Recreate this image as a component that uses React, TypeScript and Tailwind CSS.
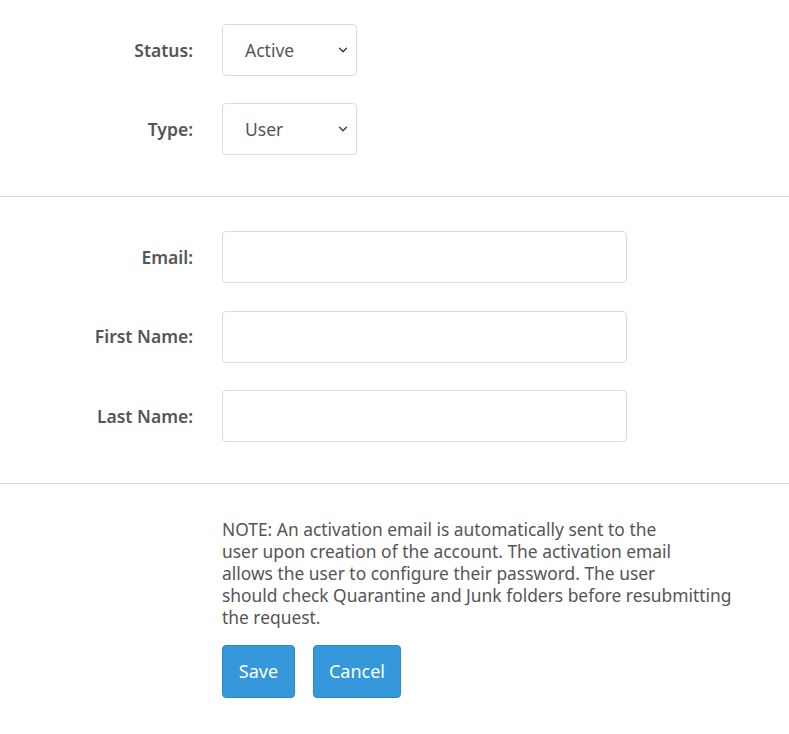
import { ChevronDown } from 'lucide-react'

const font = { fontFamily: '"Noto Sans", "Open Sans", "Liberation Sans", sans-serif' }

function SelectField({ label, value, options }: { label: string; value: string; options: string[] }) {
  return (
    <div className="flex items-center">
      <label className="w-[193px] text-right text-[17.5px] font-semibold text-[#555]">{label}</label>
      <div className="relative ml-[29px] w-[135px]">
        <select
          defaultValue={value}
          className="h-[52px] w-full appearance-none rounded-[4px] border border-[#dcdcdc] bg-white pl-[22px] text-[17.5px] text-[#555] outline-none"
        >
          {options.map((o) => (
            <option key={o}>{o}</option>
          ))}
        </select>
        <ChevronDown className="pointer-events-none absolute right-[7px] top-[19px] h-[14px] w-[14px] text-[#333]" strokeWidth={2.2} />
      </div>
    </div>
  )
}

function TextField({ label }: { label: string }) {
  return (
    <div className="flex items-center">
      <label className="w-[193px] text-right text-[17.5px] font-semibold text-[#555]">{label}</label>
      <input
        type="text"
        className="ml-[29px] h-[52px] w-[405px] rounded-[4px] border border-[#dcdcdc] bg-white px-3 text-[17.5px] text-[#555] outline-none"
      />
    </div>
  )
}

export default function App() {
  return (
    <div className="min-h-screen bg-white pt-[24px]" style={font}>
      {/* Account settings */}
      <div className="flex flex-col gap-[27px] pb-[41px]">
        <SelectField label="Status:" value="Active" options={['Active', 'Inactive']} />
        <SelectField label="Type:" value="User" options={['User', 'Admin']} />
      </div>

      {/* Personal info */}
      <div className="flex flex-col gap-[27.5px] border-t border-[#dedede] pt-[34px] pb-[41px]">
        <TextField label="Email:" />
        <TextField label="First Name:" />
        <TextField label="Last Name:" />
      </div>

      {/* Note + actions */}
      <div className="border-t border-[#dedede] pl-[222px] pt-[34px]">
        <p className="text-[17.4px] leading-[22px] text-[#555]">
          NOTE: An activation email is automatically sent to the
          <br />
          user upon creation of the account. The activation email
          <br />
          allows the user to configure their password. The user
          <br />
          should check Quarantine and Junk folders before resubmitting
          <br />
          the request.
        </p>
        <div className="mt-[17px] flex gap-[18px]">
          <button className="h-[53px] w-[73px] rounded-[4px] border border-[#2e86c4] bg-[#3498db] text-[18px] text-white">
            Save
          </button>
          <button className="h-[53px] w-[88px] rounded-[4px] border border-[#2e86c4] bg-[#3498db] text-[18px] text-white">
            Cancel
          </button>
        </div>
      </div>
    </div>
  )
}
